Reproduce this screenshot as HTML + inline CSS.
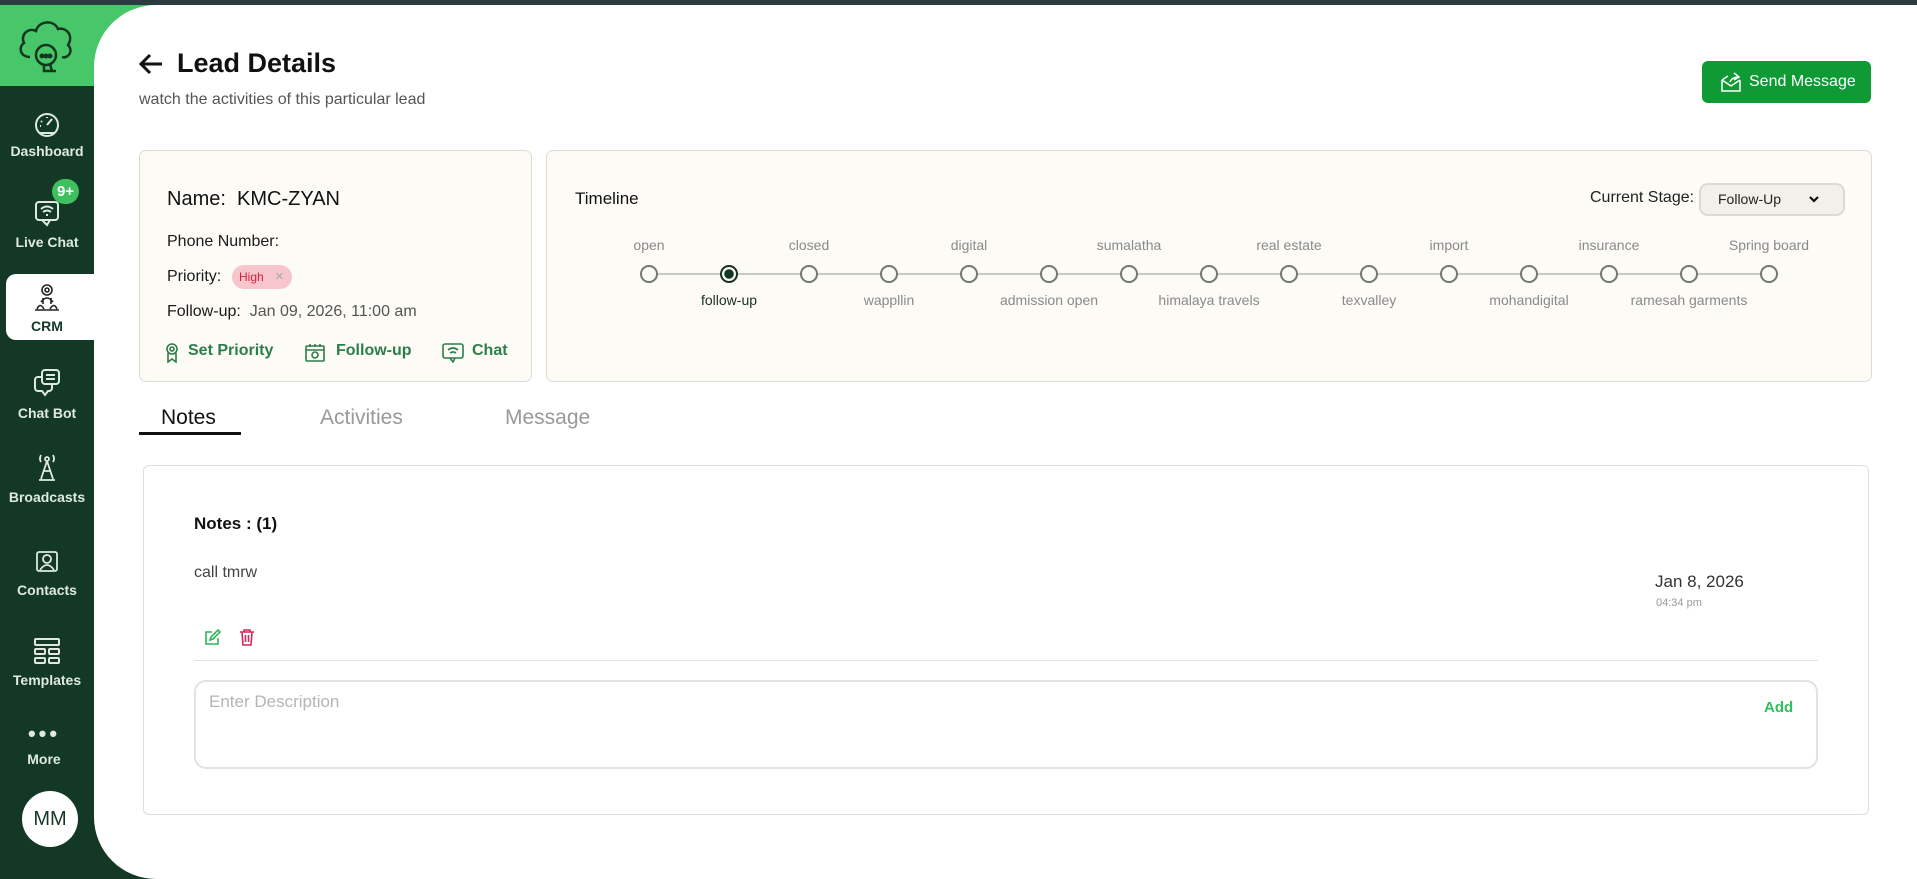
<!DOCTYPE html>
<html><head><meta charset="utf-8"><style>
*{box-sizing:border-box;margin:0;padding:0}
body{width:1917px;height:879px;overflow:hidden;background:#143826;font-family:"Liberation Sans",sans-serif;position:relative}
.abs{position:absolute}
.topbar{left:0;top:0;width:1917px;height:5px;background:#2b3b40;z-index:5}
.green{left:0;top:5px;width:200px;height:81px;background:#48c76a}
.main{left:94px;top:5px;width:1823px;height:874px;background:#fff;border-radius:62px 0 0 62px}
.nav{left:0;width:94px;text-align:center;color:#dfe9df;font-size:14px;font-weight:bold}
.nav svg{display:block;margin:0 auto 6px}
.card{background:#fcfbf6;border:1px solid #dcdcd6;border-radius:7px}
.lbl{color:#1a1a1a;font-size:16px}
.tl{font-size:14px;color:#8a8a8a;transform:translateX(-50%);white-space:nowrap}
.dot{width:18px;height:18px;border:2px solid #707a72;border-radius:50%;background:#fcfbf6;transform:translate(-50%,-50%)}
</style></head><body>
<div class="abs topbar"></div>
<div class="abs green"></div>
<div class="abs main"></div>

<svg class="abs" style="left:16px;top:17px" width="60" height="58" viewBox="0 0 60 58" fill="none" stroke="#14361f" stroke-width="2.5">
<path d="M14 40 C4 40 2 30 8 26 C4 18 12 10 20 14 C22 4 38 2 42 12 C50 10 58 18 52 28 C58 34 52 42 46 40"/>
<circle cx="30" cy="38" r="10"/><path d="M28 48 L28 54 L40 54 M34 47 L36 54"/>
<circle cx="26" cy="39" r="1.3" fill="#14361f"/><circle cx="30" cy="39" r="1.3" fill="#14361f"/><circle cx="34" cy="39" r="1.3" fill="#14361f"/>
</svg>

<div class="abs nav" style="top:111px"><svg width="28" height="26" viewBox="0 0 28 26" fill="none" stroke="#dfe9df" stroke-width="2"><circle cx="14" cy="14" r="11"/><path d="M14 14 L19 8 M8 10 L9 11 M14 6v1 M7 15h1" /><path d="M6 22 H22"/></svg>Dashboard</div>
<div class="abs nav" style="top:196px"><svg width="30" height="32" viewBox="0 0 30 32" fill="none" stroke="#dfe9df" stroke-width="2"><rect x="4" y="6" width="22" height="18" rx="3"/><path d="M10 24 L15 29 L18 24 M9 13 Q15 8 21 13 M11 16 Q15 13 19 16 M14 19h2"/></svg>Live Chat</div>
<div class="abs" style="left:52px;top:179px;width:27px;height:25px;border-radius:13px;background:#3fbf5d;color:#fff;font-weight:bold;font-size:15px;text-align:center;line-height:25px">9+</div>
<div class="abs" style="left:6px;top:274px;width:88px;height:66px;background:#fff;border-radius:10px 0 0 10px"></div>
<div class="abs nav" style="top:282px;color:#143826"><svg width="26" height="30" viewBox="0 0 26 30" fill="none" stroke="#222" stroke-width="1.6"><circle cx="13" cy="8" r="5"/><circle cx="13" cy="8" r="2"/><path d="M7 20 Q13 12 19 20 M3 27 Q6 20 10 27 M16 27 Q20 20 23 27 M1 28 H25 M9 16 v6 M17 16 v6"/></svg>CRM</div>
<div class="abs nav" style="top:367px"><svg width="30" height="32" viewBox="0 0 30 32" fill="none" stroke="#dfe9df" stroke-width="2"><rect x="10" y="3" width="17" height="14" rx="3"/><path d="M14 8h9 M14 12h9"/><path d="M10 10 H6 a3 3 0 0 0 -3 3 v8 a3 3 0 0 0 3 3 h4 l3 4 l3 -4 h1 a3 3 0 0 0 3 -3 v-4"/></svg>Chat Bot</div>
<div class="abs nav" style="top:453px"><svg width="28" height="30" viewBox="0 0 28 30" fill="none" stroke="#dfe9df" stroke-width="1.8"><circle cx="14" cy="6" r="2"/><path d="M8 2 Q6 6 8 9 M20 2 Q22 6 20 9 M14 8 L8 26 M14 8 L20 26 M6 27 H22 M10 18 H18"/></svg>Broadcasts</div>
<div class="abs nav" style="top:548px"><svg width="28" height="28" viewBox="0 0 28 28" fill="none" stroke="#dfe9df" stroke-width="1.8"><rect x="4" y="4" width="20" height="19" rx="2"/><circle cx="14" cy="11" r="4"/><path d="M7 22 Q14 12 21 22"/></svg>Contacts</div>
<div class="abs nav" style="top:636px"><svg width="30" height="30" viewBox="0 0 30 30" fill="none" stroke="#dfe9df" stroke-width="2"><rect x="3" y="3" width="24" height="6" rx="1"/><rect x="3" y="13" width="10" height="5" rx="1"/><rect x="17" y="13" width="10" height="5" rx="1"/><rect x="3" y="22" width="10" height="5" rx="1"/><rect x="17" y="22" width="10" height="5" rx="1"/></svg>Templates</div>
<div class="abs nav" style="top:727px;left:-3px"><div style="font-size:22px;letter-spacing:3px;line-height:14px;margin-bottom:10px">•••</div>More</div>
<div class="abs" style="left:22px;top:791px;width:56px;height:56px;border-radius:50%;background:#fff;color:#143826;font-size:20px;text-align:center;line-height:56px">MM</div>

<svg class="abs" style="left:138px;top:52px" width="26" height="24" viewBox="0 0 26 24" fill="none" stroke="#111" stroke-width="3"><path d="M24 12 H4 M12 3 L3 12 L12 21"/></svg>
<div class="abs" style="left:177px;top:48px;font-size:27px;font-weight:bold;color:#111">Lead Details</div>
<div class="abs" style="left:139px;top:91px;font-size:16px;color:#555">watch the activities of this particular lead</div>
<div class="abs" style="left:1702px;top:61px;width:169px;height:42px;background:#0f9a36;border-radius:6px;color:#fff;font-size:16px;line-height:42px;padding-left:47px">Send Message</div>
<svg class="abs" style="left:1720px;top:71px" width="22" height="22" viewBox="0 0 22 22" fill="none" stroke="#fff" stroke-width="1.5"><path d="M2 9 V20 H20 V9 M2 9 L11 15 L20 9 M2 9 L8 5 M14 2 L19 6 L14 9 M19 6 Q12 6 10 11"/></svg>

<div class="abs card" style="left:139px;top:150px;width:393px;height:232px"></div>
<div class="abs" style="left:167px;top:188px;font-size:20px;color:#111">Name:&nbsp; KMC-ZYAN</div>
<div class="abs lbl" style="left:167px;top:233px">Phone Number:</div>
<div class="abs lbl" style="left:167px;top:268px">Priority:</div>
<div class="abs" style="left:232px;top:265px;width:60px;height:24px;border-radius:12px;background:#f7c6cd;color:#d0203c;font-size:12px;line-height:24px;padding-left:7px">High <span style="color:#aaa;font-size:15px;margin-left:8px">×</span></div>
<div class="abs lbl" style="left:167px;top:303px">Follow-up:&nbsp; <span style="color:#555">Jan 09, 2026, 11:00 am</span></div>
<div class="abs" style="left:165px;top:342px;font-size:16px;font-weight:bold;color:#2e7d4b;white-space:nowrap">
<svg style="position:absolute;left:0;top:1px" width="14" height="20" viewBox="0 0 14 20" fill="none" stroke="#2e7d4b" stroke-width="1.6"><circle cx="7" cy="6" r="5"/><circle cx="7" cy="6" r="2"/><path d="M3 10 V19 L7 16 L11 19 V10"/></svg><span style="position:absolute;left:23px">Set Priority</span>
<svg style="position:absolute;left:140px;top:1px" width="20" height="19" viewBox="0 0 20 19" fill="none" stroke="#2e7d4b" stroke-width="1.6"><rect x="1" y="3" width="18" height="15" rx="1"/><path d="M1 7 H19 M5 1 V4 M10 1 V4 M15 1 V4"/><circle cx="10" cy="12" r="3"/></svg><span style="position:absolute;left:171px">Follow-up</span>
<svg style="position:absolute;left:277px;top:1px" width="22" height="20" viewBox="0 0 22 20" fill="none" stroke="#2e7d4b" stroke-width="1.6"><rect x="1" y="1" width="20" height="14" rx="2"/><path d="M8 15 L11 19 L13 15 M6 7 Q11 3 16 7 M8 10 Q11 8 14 10"/></svg><span style="position:absolute;left:307px">Chat</span></div>

<div class="abs card" style="left:546px;top:150px;width:1326px;height:232px"></div>
<div class="abs" style="left:575px;top:189px;font-size:17px;color:#111">Timeline</div>
<div class="abs" style="left:1590px;top:189px;font-size:16px;color:#222">Current Stage:</div>
<div class="abs" style="left:1699px;top:183px;width:146px;height:33px;border:2px solid #dad9d3;border-radius:9px;background:#f1f0eb;font-size:14px;color:#222;line-height:29px;padding-left:17px">Follow-Up</div>
<svg class="abs" style="left:1808px;top:195px" width="12" height="9" viewBox="0 0 12 9" fill="none" stroke="#111" stroke-width="2.2"><path d="M2 2 L6 6 L10 2"/></svg>
<div class="abs" style="left:649px;top:273px;width:1120px;height:2px;background:#c5cbc0"></div>
<div id="tl"></div>

<div class="abs" style="left:161px;top:406px;font-size:21px;color:#111">Notes</div>
<div class="abs" style="left:139px;top:432px;width:102px;height:3px;background:#111"></div>
<div class="abs" style="left:320px;top:406px;font-size:21px;color:#999">Activities</div>
<div class="abs" style="left:505px;top:406px;font-size:21px;color:#999">Message</div>

<div class="abs" style="left:143px;top:465px;width:1726px;height:350px;border:1px solid #dedede;border-radius:6px;background:#fff"></div>
<div class="abs" style="left:194px;top:514px;font-size:17px;font-weight:bold;color:#111">Notes : (1)</div>
<div class="abs" style="left:194px;top:564px;font-size:16px;color:#444">call tmrw</div>
<div class="abs" style="left:1655px;top:572px;font-size:17px;color:#333">Jan 8, 2026</div>
<div class="abs" style="left:1656px;top:597px;font-size:11px;color:#999">04:34 pm</div>
<svg class="abs" style="left:203px;top:629px" width="18" height="18" viewBox="0 0 18 18" fill="none" stroke="#2fb457" stroke-width="1.6"><path d="M9 3 H3 V15 H15 V9 M7 11 L8 8 L15 1 L17 3 L10 10 Z"/></svg>
<svg class="abs" style="left:239px;top:628px" width="16" height="19" viewBox="0 0 16 19" fill="none" stroke="#cf2a56" stroke-width="1.6"><path d="M1 4 H15 M5 4 V2 H11 V4 M3 4 L4 17 H12 L13 4 M6.5 7 V14 M9.5 7 V14"/></svg>
<div class="abs" style="left:194px;top:660px;width:1624px;height:1px;background:#e3e3e3"></div>
<div class="abs" style="left:194px;top:680px;width:1624px;height:89px;border:2px solid #e2e2e2;border-radius:12px"></div>
<div class="abs" style="left:209px;top:692px;font-size:17px;color:#b5b5b5">Enter Description</div>
<div class="abs" style="left:1764px;top:699px;font-size:15px;font-weight:bold;color:#2fbf5d">Add</div>

<script>
var tops=["open","","closed","","digital","","sumalatha","","real estate","","import","","insurance","","Spring board"];
var bots=["","follow-up","","wappllin","","admission open","","himalaya travels","","texvalley","","mohandigital","","ramesah garments",""];
var h="";
for(var i=0;i<15;i++){var x=649+i*80;
if(tops[i])h+='<div class="abs tl" style="left:'+x+'px;top:237px">'+tops[i]+'</div>';
if(bots[i])h+='<div class="abs tl" style="left:'+x+'px;top:292px;'+(i==1?'color:#1a2e22':'')+'">'+bots[i]+'</div>';
h+='<div class="abs dot" style="left:'+x+'px;top:274px;'+(i==1?'border-color:#1a2e22;background:radial-gradient(circle,#143826 0 4.5px,#fcfbf6 5px)':'')+'"></div>';}
document.getElementById('tl').innerHTML=h;
</script>
</body></html>
